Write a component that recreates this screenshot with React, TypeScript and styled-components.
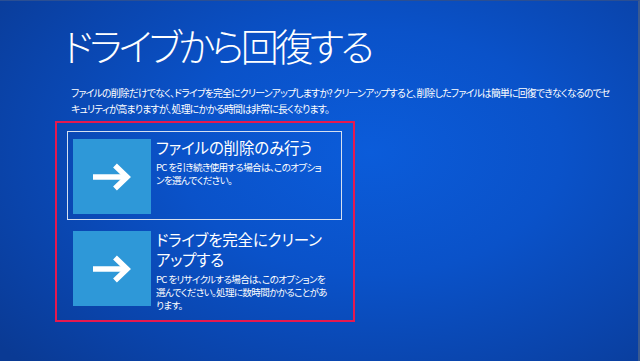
import styled, { createGlobalStyle } from "styled-components"

const GlobalStyle = createGlobalStyle`
html, body {
  margin: 0;
  padding: 0;
  background: #0a3f9e;
}
`

const Screen = styled.div`
width: 640px;
height: 361px;
box-sizing: border-box;
padding: 22px 0 0 55px;
overflow: hidden;
color: #ffffff;
font-family: "Noto Sans CJK JP", "Noto Sans", sans-serif;
font-feature-settings: "palt";
background: radial-gradient(ellipse 75% 85% at 58% 42%, #0b5cda 0%, #0a52c9 40%, #0a44ab 75%, #0a3a94 100%);
border-top: 1px solid #2b4f93;
border-right: 2px solid #3a5a90;
`

const Title = styled.h1`
margin: 0 0 0 8px;
font-size: 38px;
font-weight: 300;
line-height: 44px;
letter-spacing: -3.6px;
`

const Lead = styled.p`
margin: 18px 0 0 16px;
font-size: 9.9px;
line-height: 16px;
letter-spacing: -0.8px;
white-space: nowrap;
`

const Choices = styled.div`
width: 300px;
height: 201px;
box-sizing: border-box;
margin-top: 4px;
padding: 8px 11px 0 10px;
border: 2.5px solid #e6194f;
display: flex;
flex-direction: column;
gap: 3px;
`

const Option = styled.div<{ $selected?: boolean }>`
display: flex;
gap: 5px;
padding: 7px 5px 5px 5px;
border: 1.5px solid ${p => (p.$selected ? "#d6e0f0" : "transparent")};
`

const Tile = styled.div`
flex: none;
width: 78px;
height: 75px;
background: #2e98d8;
display: flex;
align-items: center;
justify-content: center;
`

const OptionText = styled.div`
margin-top: -2px;
`

const OptionTitle = styled.div`
font-size: 15.5px;
line-height: 20px;
letter-spacing: -0.2px;
`

const OptionDesc = styled.div`
margin-top: 4px;
font-size: 9.6px;
line-height: 13px;
letter-spacing: -0.7px;
white-space: nowrap;
`

const Arrow = () => (
    <svg width="38" height="28" viewBox="0 0 38 28">
        <path d="M0 14 H33" stroke="#ffffff" strokeWidth="5.5" fill="none" />
        <path d="M22 2.5 L34 14 L22 25.5" stroke="#ffffff" strokeWidth="5.5" fill="none" strokeLinejoin="miter" />
    </svg>
)

const App = () => {

    return (
        <>
            <GlobalStyle />
            <Screen>
                <Title>ドライブから回復する</Title>
                <Lead>
                    ファイルの削除だけでなく、ドライブを完全にクリーンアップしますか? クリーンアップすると、削除したファイルは簡単に回復できなくなるのでセ<br />
                    キュリティが高まりますが、処理にかかる時間は非常に長くなります。
                </Lead>
                <Choices>
                    <Option $selected>
                        <Tile><Arrow /></Tile>
                        <OptionText>
                            <OptionTitle>ファイルの削除のみ行う</OptionTitle>
                            <OptionDesc>
                                PC を引き続き使用する場合は、このオプショ<br />
                                ンを選んでください。
                            </OptionDesc>
                        </OptionText>
                    </Option>
                    <Option>
                        <Tile><Arrow /></Tile>
                        <OptionText>
                            <OptionTitle>ドライブを完全にクリーン<br />アップする</OptionTitle>
                            <OptionDesc>
                                PC をリサイクルする場合は、このオプションを<br />
                                選んでください。処理に数時間かかることがあ<br />
                                ります。
                            </OptionDesc>
                        </OptionText>
                    </Option>
                </Choices>
            </Screen>
        </>
    )
}

export default App;
